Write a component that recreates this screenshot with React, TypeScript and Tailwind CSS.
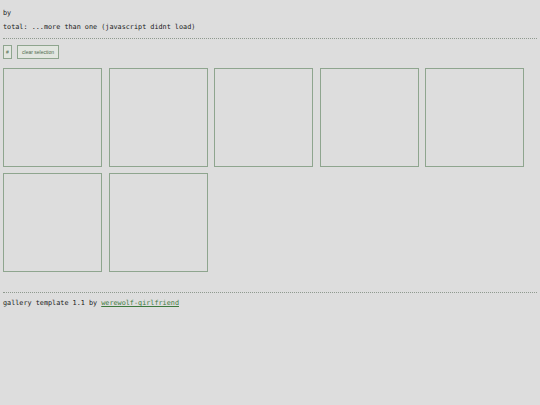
import React from 'react';

const mono = { fontFamily: '"DejaVu Sans Mono", "Liberation Mono", monospace' };

export default function App() {
  const tiles = Array.from({ length: 7 }, (_, i) => i);

  return (
    <div className="min-h-[405px] w-full bg-[#dddddd] px-[3px] text-[#1a1a1a]" style={mono}>
      <p className="pt-[9px] text-[6.8px] leading-[8px]">by</p>
      <p className="mt-[6px] text-[6.8px] leading-[8px]">total: ...more than one (javascript didnt load)</p>

      <hr className="mt-[7px] border-0 border-t border-dotted border-[#8f9a8f]" />

      <div className="mt-[6px] flex items-center gap-[5px] font-['Liberation_Sans',sans-serif]">
        <button type="button" className="flex h-[14px] w-[9px] items-center justify-center border border-[#8ea58e] bg-[#e2e6e0] text-[5px] leading-none text-[#4f6a4f]">#</button>
        <button type="button" className="flex h-[14px] w-[42px] items-center justify-center border border-[#8ea58e] bg-[#e2e6e0] text-[5px] leading-none text-[#4f6a4f]">clear selection</button>
      </div>

      <div className="mt-[9px] flex flex-wrap gap-x-[6.5px] gap-y-[6px]">
        {tiles.map((tile) => (
          <div key={tile} className="h-[99px] w-[99px] border border-[#8ea58e]" />
        ))}
      </div>

      <hr className="mt-[20px] border-0 border-t border-dotted border-[#8f9a8f]" />

      <p className="mt-[6px] text-[6.8px] leading-[8px]">
        gallery template 1.1 by <a href="#" className="text-[#3d7a3d] underline">werewolf-girlfriend</a>
      </p>
    </div>
  );
}
